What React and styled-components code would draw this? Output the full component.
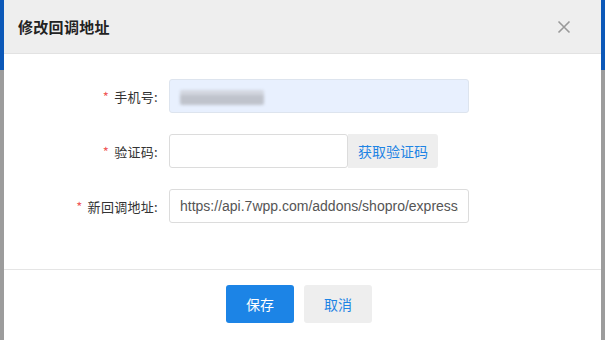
import React from 'react';
import styled, { createGlobalStyle } from 'styled-components';

const GlobalStyle = createGlobalStyle`
  html, body {
    margin: 0;
    padding: 0;
    width: 605px;
    height: 340px;
    overflow: hidden;
    font-family: "Microsoft YaHei", "Noto Sans CJK SC", "Liberation Sans", sans-serif;
  }
`;

const Backdrop = styled.div`
  width: 605px;
  height: 340px;
  display: flex;
  padding-left: 4px;
  box-sizing: border-box;
  overflow: hidden;
  background: linear-gradient(to bottom, #0c58b8 0, #0c58b8 70px, #9c9c9c 70px, #9c9c9c 100%);
`;

const Dialog = styled.div`
  width: 597px;
  height: 340px;
  background: #fff;
  display: flex;
  flex-direction: column;
  overflow: hidden;
`;

const Header = styled.div`
  height: 54px;
  flex-shrink: 0;
  background: #eeeeee;
  border-bottom: 1px solid #e2e2e2;
  display: flex;
  align-items: center;
  justify-content: space-between;
  padding: 0 30px 0 14px;
  box-sizing: border-box;
`;

const Title = styled.h3`
  margin: 0;
  font-size: 15px;
  font-weight: bold;
  color: #222;
  letter-spacing: 0.3px;
`;

const Close = styled.button`
  border: none;
  background: none;
  padding: 0;
  width: 14px;
  height: 14px;
  display: flex;
  cursor: pointer;
`;

const Body = styled.div`
  padding: 25px 0 46px;
  display: flex;
  flex-direction: column;
  gap: 21px;
  border-bottom: 1px solid #e5e5e5;
`;

const Row = styled.div`
  display: flex;
  align-items: center;
  height: 34px;
`;

const Label = styled.label`
  width: 165px;
  padding-right: 11px;
  box-sizing: border-box;
  text-align: right;
  font-size: 13px;
  color: #333;
  letter-spacing: 0.3px;
`;

const Star = styled.span`
  color: #f05a5a;
  margin-right: 5px;
`;

const Field = styled.div`
  position: relative;
  display: flex;
`;

const Input = styled.input`
  width: ${({ w }) => w}px;
  height: 34px;
  box-sizing: border-box;
  border: 1px solid ${({ filled }) => (filled ? '#dde4ee' : '#dcdcdc')};
  border-radius: 3px;
  background: ${({ filled }) => (filled ? '#e8f0fe' : '#fff')};
  padding: 0 10px;
  margin: 0;
  font-family: "Liberation Sans", Arial, sans-serif;
  font-size: 14px;
  color: #555;
  outline: none;
`;

const Blur = styled.div`
  position: absolute;
  left: 11px;
  top: 11px;
  width: 84px;
  height: 15px;
  background: linear-gradient(to bottom, #d2d6df 0, #d2d6df 35%, #bfc3cc 35%, #bfc3cc 100%);
  filter: blur(1.5px);
  border-radius: 2px;
`;

const CodeButton = styled.button`
  height: 34px;
  width: 90px;
  border: none;
  border-radius: 0 3px 3px 0;
  background: #eeeeee;
  color: #1e84e4;
  font-family: inherit;
  font-size: 14px;
  padding: 0;
  cursor: pointer;
`;

const Footer = styled.div`
  display: flex;
  justify-content: center;
  gap: 10px;
  padding: 15px 7px 0 0;
`;

const Button = styled.button`
  width: 68px;
  height: 38px;
  border: none;
  border-radius: 3px;
  background: ${({ primary }) => (primary ? '#1c84e6' : '#eeeeee')};
  color: ${({ primary }) => (primary ? '#fff' : '#1e84e4')};
  font-family: inherit;
  font-size: 14px;
  cursor: pointer;
`;

export default function App() {
  return (
    <>
      <GlobalStyle />
      <Backdrop>
        <Dialog>
          <Header>
            <Title>修改回调地址</Title>
            <Close aria-label="关闭">
              <svg width="14" height="14" viewBox="0 0 14 14">
                <path d="M1.5 1.5 L12.5 12.5 M12.5 1.5 L1.5 12.5" stroke="#999" strokeWidth="1.6" />
              </svg>
            </Close>
          </Header>
          <Body>
            <Row>
              <Label><Star>*</Star>手机号:</Label>
              <Field>
                <Input w={300} filled readOnly value="" />
                <Blur />
              </Field>
            </Row>
            <Row>
              <Label><Star>*</Star>验证码:</Label>
              <Input w={179} readOnly value="" />
              <CodeButton>获取验证码</CodeButton>
            </Row>
            <Row>
              <Label><Star>*</Star>新回调地址:</Label>
              <Input w={300} readOnly value="https://api.7wpp.com/addons/shopro/express/callback" />
            </Row>
          </Body>
          <Footer>
            <Button primary>保存</Button>
            <Button>取消</Button>
          </Footer>
        </Dialog>
      </Backdrop>
    </>
  );
}
